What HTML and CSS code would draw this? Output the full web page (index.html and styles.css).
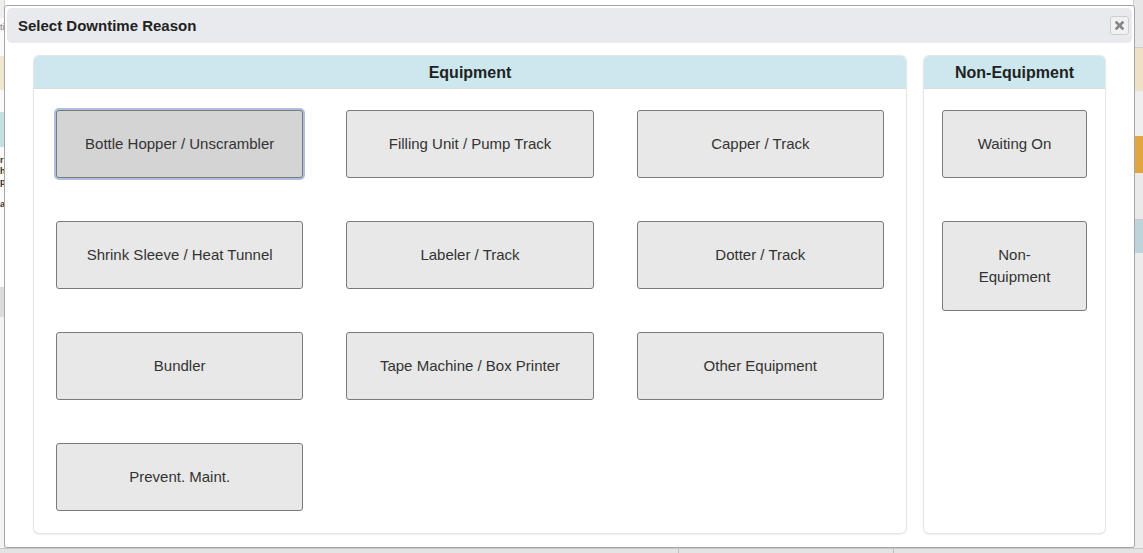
FILE: index.html
```html
<!DOCTYPE html>
<html>
<head>
<meta charset="utf-8">
<title>Select Downtime Reason</title>
<link rel="stylesheet" href="styles.css">
</head>
<body>
<div class="page">
  <div class="strip strip-left">
    <div class="blk blk-top"></div>
    <div class="blk blk-text">ti</div>
    <div class="blk blk-beige"></div>
    <div class="blk blk-white1"></div>
    <div class="blk blk-blue"></div>
    <div class="blk blk-text2">r<br>h<br>p<br><br>a</div>
    <div class="blk blk-gray"></div>
    <div class="blk blk-rest"></div>
  </div>
  <div class="page-mid"></div>
  <div class="strip strip-right">
    <div class="blk r-top"></div>
    <div class="blk r-beige"></div>
    <div class="blk r-white"></div>
    <div class="blk r-orange"></div>
    <div class="blk r-gray"></div>
    <div class="blk r-blue"></div>
    <div class="blk r-rest"></div>
  </div>
</div>
<div class="page-bottom">
  <div class="pb-cell pb-a"></div>
  <div class="pb-cell pb-b"></div>
  <div class="pb-cell pb-c"></div>
</div>

<div class="dialog">
  <div class="titlebar">
    <span class="title">Select Downtime Reason</span>
    <button class="close" aria-label="close">
      <svg width="9" height="9" viewBox="0 0 9 9"><path d="M1.5 1.5 L7.5 7.5 M7.5 1.5 L1.5 7.5" stroke="#858585" stroke-width="2.6" stroke-linecap="square"/></svg>
    </button>
  </div>
  <div class="content">
    <section class="panel panel-equip">
      <div class="panel-head">Equipment</div>
      <div class="grid grid-equip">
        <button class="reason active">Bottle Hopper / Unscrambler</button>
        <button class="reason">Filling Unit / Pump Track</button>
        <button class="reason">Capper / Track</button>
        <button class="reason">Shrink Sleeve / Heat Tunnel</button>
        <button class="reason">Labeler / Track</button>
        <button class="reason">Dotter / Track</button>
        <button class="reason">Bundler</button>
        <button class="reason">Tape Machine / Box Printer</button>
        <button class="reason">Other Equipment</button>
        <button class="reason">Prevent. Maint.</button>
      </div>
    </section>
    <section class="panel panel-non">
      <div class="panel-head">Non-Equipment</div>
      <div class="grid grid-non">
        <button class="reason">Waiting On</button>
        <button class="reason">Non-Equipment</button>
      </div>
    </section>
  </div>
</div>
</body>
</html>
```

FILE: styles.css
```css
html, body {
  margin: 0;
  padding: 0;
}
body {
  width: 1143px;
  height: 553px;
  overflow: hidden;
  background: #e6e6e6;
  font-family: "Liberation Sans", Arial, sans-serif;
  position: relative;
}
.page {
  display: flex;
  height: 548px;
  background: #ffffff;
}
.strip {
  display: flex;
  flex-direction: column;
}
.strip-left {
  width: 4px;
  border-right: 1px solid #d6d6d6;
}
.page-mid {
  flex: 1;
}
.strip-right {
  width: 9px;
  border-left: 1px solid #cfcfcf;
}
.blk { flex: none; font-size: 9px; line-height: 11px; color: #333; overflow: hidden; }
.blk-top { height: 18px; background: #efefef; }
.blk-text { height: 38px; background: #fafafa; padding-top: 4px; box-sizing: border-box; color: #777; }
.blk-beige { height: 34px; background: #f2e7d1; }
.blk-white1 { height: 22px; background: #fafafa; }
.blk-blue { height: 35px; background: #c6dfe5; }
.blk-text2 { height: 140px; background: #fbfbfb; padding-top: 8px; box-sizing: border-box; font-weight: bold; }
.blk-gray { height: 30px; background: #dcdcdc; }
.blk-rest { flex: 1; background: #f4f4f4; }
.r-top { height: 47px; background: #e7e7e7; border-bottom: 1px solid #cfcfcf; }
.r-beige { height: 43px; background: #eee1c5; }
.r-white { height: 45px; background: #efefef; }
.r-orange { height: 37px; background: #e1a63f; }
.r-gray { height: 46px; background: #eaeaea; border-bottom: 1px solid #c9c9c9; }
.r-blue { height: 33px; background: #bcd4da; }
.r-rest { flex: 1; background: #ececec; }

.page-bottom {
  display: flex;
  height: 5px;
  border-top: 1px solid #c8c8c8;
  box-sizing: border-box;
  background: #e4e4e4;
}
.pb-cell { height: 100%; }
.pb-a { width: 678px; border-right: 1px solid #bdbdbd; }
.pb-b { width: 214px; border-right: 1px solid #bdbdbd; }
.pb-c { flex: 1; }

/* dialog overlays the page */
.dialog {
  position: absolute;
  left: 4px;
  top: 5px;
  width: 1131px;
  height: 543px;
  box-sizing: border-box;
  background: #ffffff;
  border: 1px solid #a6a6a6;
  border-radius: 3px;
  padding: 2px;
  display: flex;
  flex-direction: column;
}
.titlebar {
  height: 35px;
  background: #e9eaee;
  border-radius: 5px;
  display: flex;
  align-items: center;
  justify-content: space-between;
  padding: 0 3px 0 11px;
  flex: none;
}
.title {
  font-weight: bold;
  font-size: 15px;
  color: #222;
}
.close {
  width: 19px;
  height: 19px;
  padding: 0;
  margin: 0;
  border: 1px solid #cdcdcd;
  border-radius: 3px;
  background: #f1f1f1;
  display: flex;
  align-items: center;
  justify-content: center;
}
.content {
  flex: 1;
  display: flex;
  gap: 18px;
  padding: 13px 27px 12px 27px;
  min-height: 0;
}
.panel {
  background: #fff;
  border-radius: 5px;
  box-shadow: 0 0 0 1px #e6e6e6, 0 1px 2px rgba(0,0,0,0.22);
  display: flex;
  flex-direction: column;
  overflow: hidden;
}
.panel-equip { flex: 1; }
.panel-non { width: 181px; flex: none; }
.panel-head {
  height: 32px;
  box-sizing: border-box;
  padding-top: 2px;
  background: #cce8ee;
  border-bottom: 1px solid #dcdcdc;
  font-weight: bold;
  font-size: 16px;
  color: #222;
  display: flex;
  align-items: center;
  justify-content: center;
  flex: none;
}
.panel-head { height: 33px; }
.grid {
  display: grid;
  row-gap: 43px;
  align-items: start;
  align-content: start;
}
.grid-equip {
  grid-template-columns: repeat(3, 1fr);
  column-gap: 43px;
  padding: 21px 22px;
}
.grid-non {
  grid-template-columns: 145px;
  padding: 21px 18px;
}
.reason {
  font-family: "Liberation Sans", Arial, sans-serif;
  font-size: 15px;
  line-height: 22px;
  color: #333;
  background: #e8e8e8;
  border: 1px solid #7a7a7a;
  border-radius: 3px;
  padding: 22px 24px;
  margin: 0;
  text-align: center;
}
.reason.active {
  background: #d4d4d4;
  box-shadow: 0 0 0 2px #aebfdd;
}
```
